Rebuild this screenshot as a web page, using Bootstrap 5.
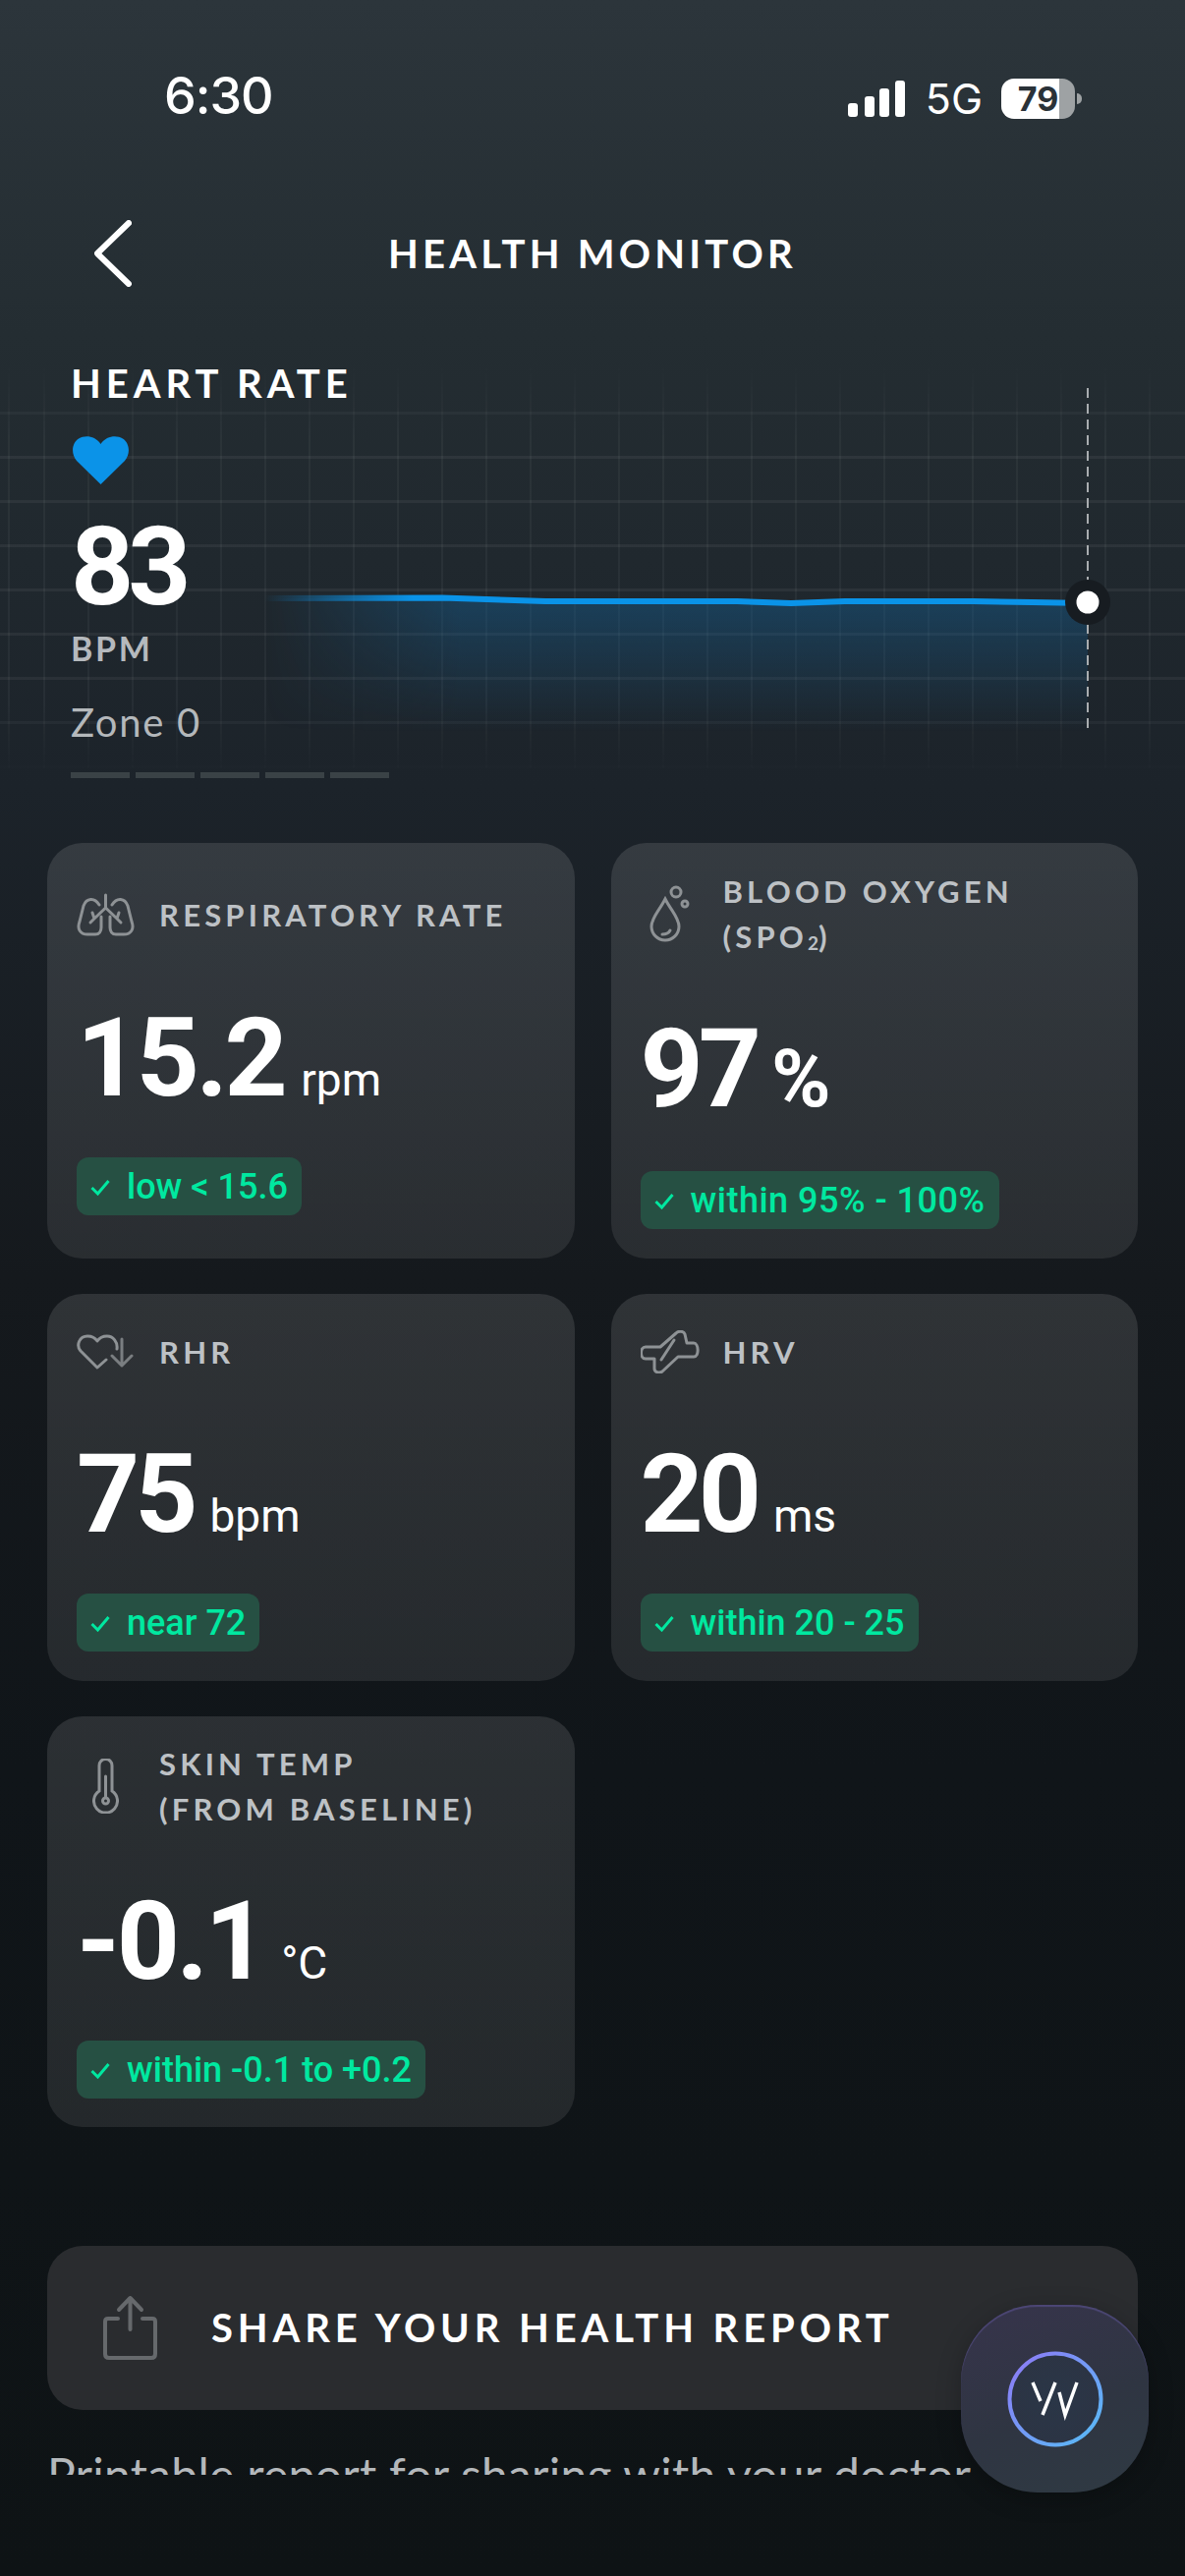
<!DOCTYPE html>
<html lang="en">
<head>
    <meta charset="UTF-8">
    <title>Health Monitor</title>
    <meta name="viewport" content="width=device-width, initial-scale=1">
    <link href="https://cdn.jsdelivr.net/npm/bootstrap@5.3.3/dist/css/bootstrap.min.css" rel="stylesheet" />
    <script src="https://cdn.jsdelivr.net/npm/bootstrap@5.3.3/dist/js/bootstrap.bundle.min.js"></script>
    <style>
        html, body { height: 2622px; }
        body {
            margin: 0;
            overflow: hidden;
            color: #fff;
            font-family: Lato, "Liberation Sans", sans-serif;
            background: linear-gradient(180deg, #2c353b 0, #242d32 340px, #1c232a 800px, #15191d 1300px, #101519 1800px, #0e1315 2622px);
        }
        .screen { width: 1206px; height: 2622px; }

        /* status bar */
        .status-bar { height: 224px; padding: 70px 105px 0 167px; font-family: Inter, "Liberation Sans", sans-serif; }
        .clock { font-size: 52px; line-height: 56px; font-weight: 500; letter-spacing: -1px; }
        .status-right { margin-top: 7px; }
        .net-label { font-size: 43px; line-height: 46px; margin: 0 19px 0 21px; }
        .battery {
            width: 75px; height: 41px; border-radius: 13px;
            background: linear-gradient(90deg, #fff 78.5%, #9ea2a4 78.5%);
            color: #2a3238; font-size: 34px; line-height: 41px; font-weight: 700; text-align: center;
        }
        .battery-nub { width: 5px; height: 11px; margin-left: 2px; border-radius: 0 5px 5px 0; background: #9ea2a4; }

        /* header */
        .top-nav { height: 68px; padding: 0 96px; display: grid; grid-template-columns: 1fr auto 1fr; align-items: center; }
        .screen-title, .section-label, .share-label { font-weight: 700; font-size: 40px; line-height: 40px; letter-spacing: 4.2px; }
        .section-label { letter-spacing: 5px; }

        /* heart rate */
        .hero { padding: 78px 72px 0; height: 500px; }
        .hero-grid {
            position: absolute; left: 0; right: 0; top: 78px; height: 422px;
            background-image:
                repeating-linear-gradient(180deg, rgba(255,255,255,.055) 0 3px, transparent 3px 45px),
                repeating-linear-gradient(90deg, rgba(255,255,255,.045) 0 2px, transparent 2px 45px);
            background-position: 0 4px, 44px 0;
            -webkit-mask-image: linear-gradient(180deg, transparent 0, #000 18%, #000 82%, transparent 100%);
            mask-image: linear-gradient(180deg, transparent 0, #000 18%, #000 82%, transparent 100%);
        }
        .hero-chart { position: absolute; left: 0; top: 78px; }
        .hero-body { z-index: 1; }
        .heart-icon { margin: 34px 0 0 2px; }
        .hero-value { margin: 28px 0 0; font-family: Roboto, sans-serif; font-weight: 700; font-size: 112px; line-height: 112px; letter-spacing: -6px; }
        .hero-unit { margin-top: 10px; font-size: 34px; line-height: 34px; font-weight: 700; letter-spacing: 2.7px; color: #b5b9bd; }
        .hero-zone { margin-top: 39px; font-size: 40px; line-height: 39px; letter-spacing: 1.700px; color: #b4b8bb; }
        .zone-track { margin-top: 31px; gap: 6px; }
        .zone-seg { width: 60px; height: 6px; background: #3a4246; }

        /* metric tiles */
        .tile-area { padding: 66px 48px 0; }
        .tile-row { --bs-gutter-x: 37px; --bs-gutter-y: 36px; }
        .tile {
            --bs-card-bg: transparent;
            border: 0; border-radius: 36px; color: #fff; padding: 26px 30px 30px;
            background: linear-gradient(180deg, rgba(255,255,255,.115), rgba(255,255,255,.085));
        }
        .tile-head { min-height: 66px; }
        .tile-resp .tile-head { margin-top: -1px; margin-bottom: 1px; }
        .tile-icon { width: 84px; flex: none; }
        .tile-icon svg { display: block; }
        .tile-title { font-size: 31px; line-height: 46px; font-weight: 700; letter-spacing: 4.2px; color: #bdc1c5; }
        .tile-title sub { font-size: 19px; bottom: -.1em; letter-spacing: 0; }
        .tile-reading { margin: 56px 0 45px; font-family: Roboto, sans-serif; height: 112px; }
        .reading-num { font-size: 112px; line-height: 112px; font-weight: 700; letter-spacing: -5px; }
        .num-loose { letter-spacing: -3.500px; }
        .reading-unit { font-size: 46px; line-height: 112px; margin-left: 17px; }
        .reading-pct { font-size: 82px; line-height: 112px; font-weight: 700; margin-left: 15px; }
        .range-tag {
            height: 59px; padding: 2px 14px 0; border-radius: 12px; gap: 17px;
            background: #265043; color: #00e8a0;
            font-family: Roboto, sans-serif; font-size: 36px; line-height: 57px; font-weight: 500;
        }
        .tile-spo2 .range-tag { letter-spacing: .5px; }
        .tile-spo2 .tile-reading { margin-bottom: 48px; }
        .tile-skin { padding-top: 25px; padding-bottom: 29px; }

        /* share */
        .share-area { padding: 121px 48px 0; }
        .share-box { height: 167px; padding: 0 57px 2px; border-radius: 36px; background: #2a2c2f; gap: 55px; }
        .share-label { letter-spacing: 4.900px; }
        .share-note { margin-top: 42px; height: 24px; overflow: hidden; font-size: 48px; line-height: 48px; letter-spacing: .25px; color: #b4b8bb; white-space: nowrap; }

        /* floating button */
        .assistant-btn {
            position: absolute; left: 978px; top: 2346px; width: 191px; height: 191px; border-radius: 78px;
            background: linear-gradient(160deg, #37344c 0, #2f3542 55%, #2f3a43 100%);
            box-shadow: inset 0 2px 1px rgba(120,105,200,.35), 0 6px 24px rgba(0,0,0,.25);
        }
    </style>
</head>
<body>
<div class="screen position-relative">

    <div class="status-bar d-flex justify-content-between align-items-start">
        <div class="clock">6:30</div>
        <div class="status-right d-flex align-items-center">
            <svg width="58" height="37" viewBox="0 0 58 37" fill="#fff">
                <rect x="0" y="23" width="10" height="14" rx="3"/>
                <rect x="17" y="16" width="10" height="21" rx="3"/>
                <rect x="32" y="8" width="10" height="29" rx="3"/>
                <rect x="48" y="0" width="10" height="37" rx="3"/>
            </svg>
            <span class="net-label">5G</span>
            <div class="battery">79</div>
            <div class="battery-nub"></div>
        </div>
    </div>

    <div class="top-nav">
        <svg width="38" height="68" viewBox="0 0 38 68" fill="none" stroke="#fff" stroke-width="6" stroke-linecap="round" stroke-linejoin="round">
            <path d="M35 3 L3 34 L35 65"/>
        </svg>
        <div class="screen-title">HEALTH MONITOR</div>
    </div>

    <section class="hero position-relative">
        <div class="hero-grid"></div>
        <svg class="hero-chart" width="1206" height="422" viewBox="0 370 1206 422" fill="none">
            <defs>
                <linearGradient id="lineFade" gradientUnits="userSpaceOnUse" x1="269" y1="0" x2="420" y2="0">
                    <stop offset="0" stop-color="#0a93e8" stop-opacity="0"/>
                    <stop offset="1" stop-color="#0a93e8"/>
                </linearGradient>
                <linearGradient id="areaFade" x1="0" y1="0" x2="0" y2="1">
                    <stop offset="0" stop-color="#14639a" stop-opacity=".42"/>
                    <stop offset="1" stop-color="#14639a" stop-opacity="0"/>
                </linearGradient>
                <linearGradient id="areaSide" gradientUnits="userSpaceOnUse" x1="269" y1="0" x2="470" y2="0">
                    <stop offset="0" stop-color="#000"/>
                    <stop offset="1" stop-color="#fff"/>
                </linearGradient>
                <mask id="areaMask"><rect x="0" y="370" width="1206" height="422" fill="url(#areaSide)"/></mask>
            </defs>
            <path d="M269 609 L450 608.5 L555 612 L750 612 L805 614 L860 612 L990 612 L1050 613 L1107 614 V745 H269 Z" fill="url(#areaFade)" mask="url(#areaMask)"/>
            <path d="M1107 395 V745" stroke="#a9adb0" stroke-width="2" stroke-dasharray="10 6"/>
            <path d="M269 609 L450 608.5 L555 612 L750 612 L805 614 L860 612 L990 612 L1050 613 L1107 614" stroke="url(#lineFade)" stroke-width="6"/>
            <circle cx="1107" cy="613" r="23" fill="#171c21"/>
            <circle cx="1107" cy="613" r="11.500" fill="#fff"/>
        </svg>
        <div class="hero-body position-relative">
            <div class="section-label">HEART RATE</div>
            <svg class="heart-icon d-block" width="57" height="49" viewBox="0 0 57 49" fill="#0b93e8">
                <path d="M28.500 49 L4 25 C-2 18 -1 7 6 2.500 C13 -1.500 23 0 28.500 8 C34 0 44 -1.500 51 2.500 C58 7 59 18 53 25 Z"/>
            </svg>
            <div class="hero-value">83</div>
            <div class="hero-unit">BPM</div>
            <div class="hero-zone">Zone 0</div>
            <div class="zone-track d-flex">
                <div class="zone-seg"></div>
                <div class="zone-seg"></div>
                <div class="zone-seg"></div>
                <div class="zone-seg"></div>
                <div class="zone-seg"></div>
            </div>
        </div>
    </section>

    <section class="tile-area">
        <div class="row tile-row">
            <div class="col-6">
                <div class="card h-100 justify-content-center tile tile-resp">
                    <div class="tile-head d-flex align-items-center">
                        <div class="tile-icon d-flex">
                            <svg class="ms-0" width="59" height="44" viewBox="0 0 59 44" fill="none" stroke="#8e9295" stroke-width="3" stroke-linecap="round" stroke-linejoin="round">
                                <path d="M23 12 C18 4 10 5 7 13 L3 29 C0 37 4 42 11 42 L19 42 C23 42 25 39 25 35 L25 24"/>
                                <path d="M36 12 C41 4 49 5 52 13 L56 29 C59 37 55 42 48 42 L40 42 C36 42 34 39 34 35 L34 24"/>
                                <path d="M29.500 2 V15 L18 26 M29.500 15 L41 26 M16 20 L18 26 L14 30 M43 20 L41 26 L45 30"/>
                            </svg>
                        </div>
                        <div class="tile-title">RESPIRATORY RATE</div>
                    </div>
                    <div class="tile-reading d-flex align-items-baseline">
                        <span class="reading-num num-loose">15.2</span><span class="reading-unit">rpm</span>
                    </div>
                    <div class="align-self-start d-inline-flex align-items-center range-tag">
                        <svg width="20" height="17" viewBox="0 0 20 17" fill="none" stroke="#00e8a0" stroke-width="3"><path d="M1.500 9 L7.500 15 L18.500 2"/></svg>
                        <span>low &lt; 15.6</span>
                    </div>
                </div>
            </div>
            <div class="col-6">
                <div class="card h-100 justify-content-center tile tile-spo2">
                    <div class="tile-head d-flex align-items-center">
                        <div class="tile-icon d-flex">
                            <svg class="ms-2" width="44" height="58" viewBox="0 0 44 58" fill="none" stroke="#8e9295" stroke-width="3" stroke-linecap="round">
                                <path d="M17 14 C11 26 3 33 3 42 A14 14 0 0 0 31 42 C31 33 23 26 17 14 Z"/>
                                <path d="M14 50 C18 50 21 48 22 46"/>
                                <circle cx="28" cy="7" r="5"/>
                                <circle cx="37" cy="19" r="3"/>
                            </svg>
                        </div>
                        <div class="tile-title">BLOOD OXYGEN<br>(SPO<sub>2</sub>)</div>
                    </div>
                    <div class="tile-reading d-flex align-items-baseline">
                        <span class="reading-num">97</span><span class="reading-pct">%</span>
                    </div>
                    <div class="align-self-start d-inline-flex align-items-center range-tag">
                        <svg width="20" height="17" viewBox="0 0 20 17" fill="none" stroke="#00e8a0" stroke-width="3"><path d="M1.500 9 L7.500 15 L18.500 2"/></svg>
                        <span>within 95% - 100%</span>
                    </div>
                </div>
            </div>
            <div class="col-6">
                <div class="card h-100 justify-content-center tile">
                    <div class="tile-head d-flex align-items-center">
                        <div class="tile-icon d-flex">
                            <svg width="58" height="36" viewBox="0 0 58 36" fill="none" stroke="#8e9295" stroke-width="3" stroke-linecap="round" stroke-linejoin="round">
                                <path d="M30 26 L21 34 L4 17 C-1 11 3 2 11 2 C15 2 19 4 21 7 C23 4 27 2 31 2 C37 2 42 8 41 15"/>
                                <path d="M46 5 V32 M36 22 L46 32 L56 22" stroke="#7a7e81"/>
                            </svg>
                        </div>
                        <div class="tile-title">RHR</div>
                    </div>
                    <div class="tile-reading d-flex align-items-baseline">
                        <span class="reading-num">75</span><span class="reading-unit">bpm</span>
                    </div>
                    <div class="align-self-start d-inline-flex align-items-center range-tag">
                        <svg width="20" height="17" viewBox="0 0 20 17" fill="none" stroke="#00e8a0" stroke-width="3"><path d="M1.500 9 L7.500 15 L18.500 2"/></svg>
                        <span>near 72</span>
                    </div>
                </div>
            </div>
            <div class="col-6">
                <div class="card h-100 justify-content-center tile">
                    <div class="tile-head d-flex align-items-center">
                        <div class="tile-icon d-flex">
                            <svg width="60" height="44" viewBox="0 0 60 44" fill="none" stroke="#8e9295" stroke-width="3" stroke-linecap="round" stroke-linejoin="round">
                                <path d="M5 17 H20 L36 3 C39 0 44 1 45 4 L47 13 H54 C59 13 60 27 54 27 H38 L22 42 C19 44 14 43 14 39 V29 H5 C-1 29 -1 17 5 17 Z"/>
                                <path d="M21 30 L34 10"/>
                            </svg>
                        </div>
                        <div class="tile-title">HRV</div>
                    </div>
                    <div class="tile-reading d-flex align-items-baseline">
                        <span class="reading-num">20</span><span class="reading-unit">ms</span>
                    </div>
                    <div class="align-self-start d-inline-flex align-items-center range-tag">
                        <svg width="20" height="17" viewBox="0 0 20 17" fill="none" stroke="#00e8a0" stroke-width="3"><path d="M1.500 9 L7.500 15 L18.500 2"/></svg>
                        <span>within 20 - 25</span>
                    </div>
                </div>
            </div>
            <div class="col-6">
                <div class="card h-100 justify-content-center tile tile-skin">
                    <div class="tile-head d-flex align-items-center">
                        <div class="tile-icon d-flex">
                            <svg class="ms-3" width="27" height="56" viewBox="0 0 27 56" fill="none" stroke="#8e9295" stroke-width="3" stroke-linecap="round">
                                <path d="M7 7 A6.500 6.500 0 0 1 20 7 V33 A12 12 0 1 1 7 33 Z"/>
                                <path d="M13.500 18 V39"/>
                                <circle cx="13.500" cy="43" r="3"/>
                            </svg>
                        </div>
                        <div class="tile-title">SKIN TEMP<br>(FROM BASELINE)</div>
                    </div>
                    <div class="tile-reading d-flex align-items-baseline">
                        <span class="reading-num num-loose">-0.1</span><span class="reading-unit">°C</span>
                    </div>
                    <div class="align-self-start d-inline-flex align-items-center range-tag">
                        <svg width="20" height="17" viewBox="0 0 20 17" fill="none" stroke="#00e8a0" stroke-width="3"><path d="M1.500 9 L7.500 15 L18.500 2"/></svg>
                        <span>within -0.1 to +0.2</span>
                    </div>
                </div>
            </div>
        </div>
    </section>

    <section class="share-area">
        <div class="share-box d-flex align-items-center">
            <svg width="55" height="66" viewBox="0 0 55 66" fill="none" stroke="#66696c" stroke-width="4" stroke-linecap="round" stroke-linejoin="round">
                <path d="M15 24 H5 Q2 24 2 27 V60 Q2 64 6 64 H49 Q53 64 53 60 V27 Q53 24 50 24 H40"/>
                <path d="M27.500 3 V35 M16 15 L27.500 3 L39 15"/>
            </svg>
            <div class="share-label">SHARE YOUR HEALTH REPORT</div>
        </div>
        <div class="share-note">Printable report for sharing with your doctor</div>
    </section>

    <div class="assistant-btn d-flex align-items-center justify-content-center">
        <svg width="100" height="100" viewBox="0 0 100 100" fill="none">
            <defs>
                <linearGradient id="ringGrad" x1="0" y1="0" x2="1" y2="1">
                    <stop offset="0" stop-color="#8f78f6"/>
                    <stop offset="1" stop-color="#56bdf6"/>
                </linearGradient>
                <radialGradient id="ringFill" cx=".5" cy=".5" r=".5">
                    <stop offset="0" stop-color="#2a3647"/>
                    <stop offset="1" stop-color="#2c3444"/>
                </radialGradient>
            </defs>
            <circle cx="50" cy="50" r="46.500" fill="url(#ringFill)" stroke="url(#ringGrad)" stroke-width="4"/>
            <path d="M27 33 L35 52 M50 33 L37 66 M54 43 L60 66 L72 33" stroke="#fff" stroke-width="3.500"/>
        </svg>
    </div>
</div>
</body>
</html>
